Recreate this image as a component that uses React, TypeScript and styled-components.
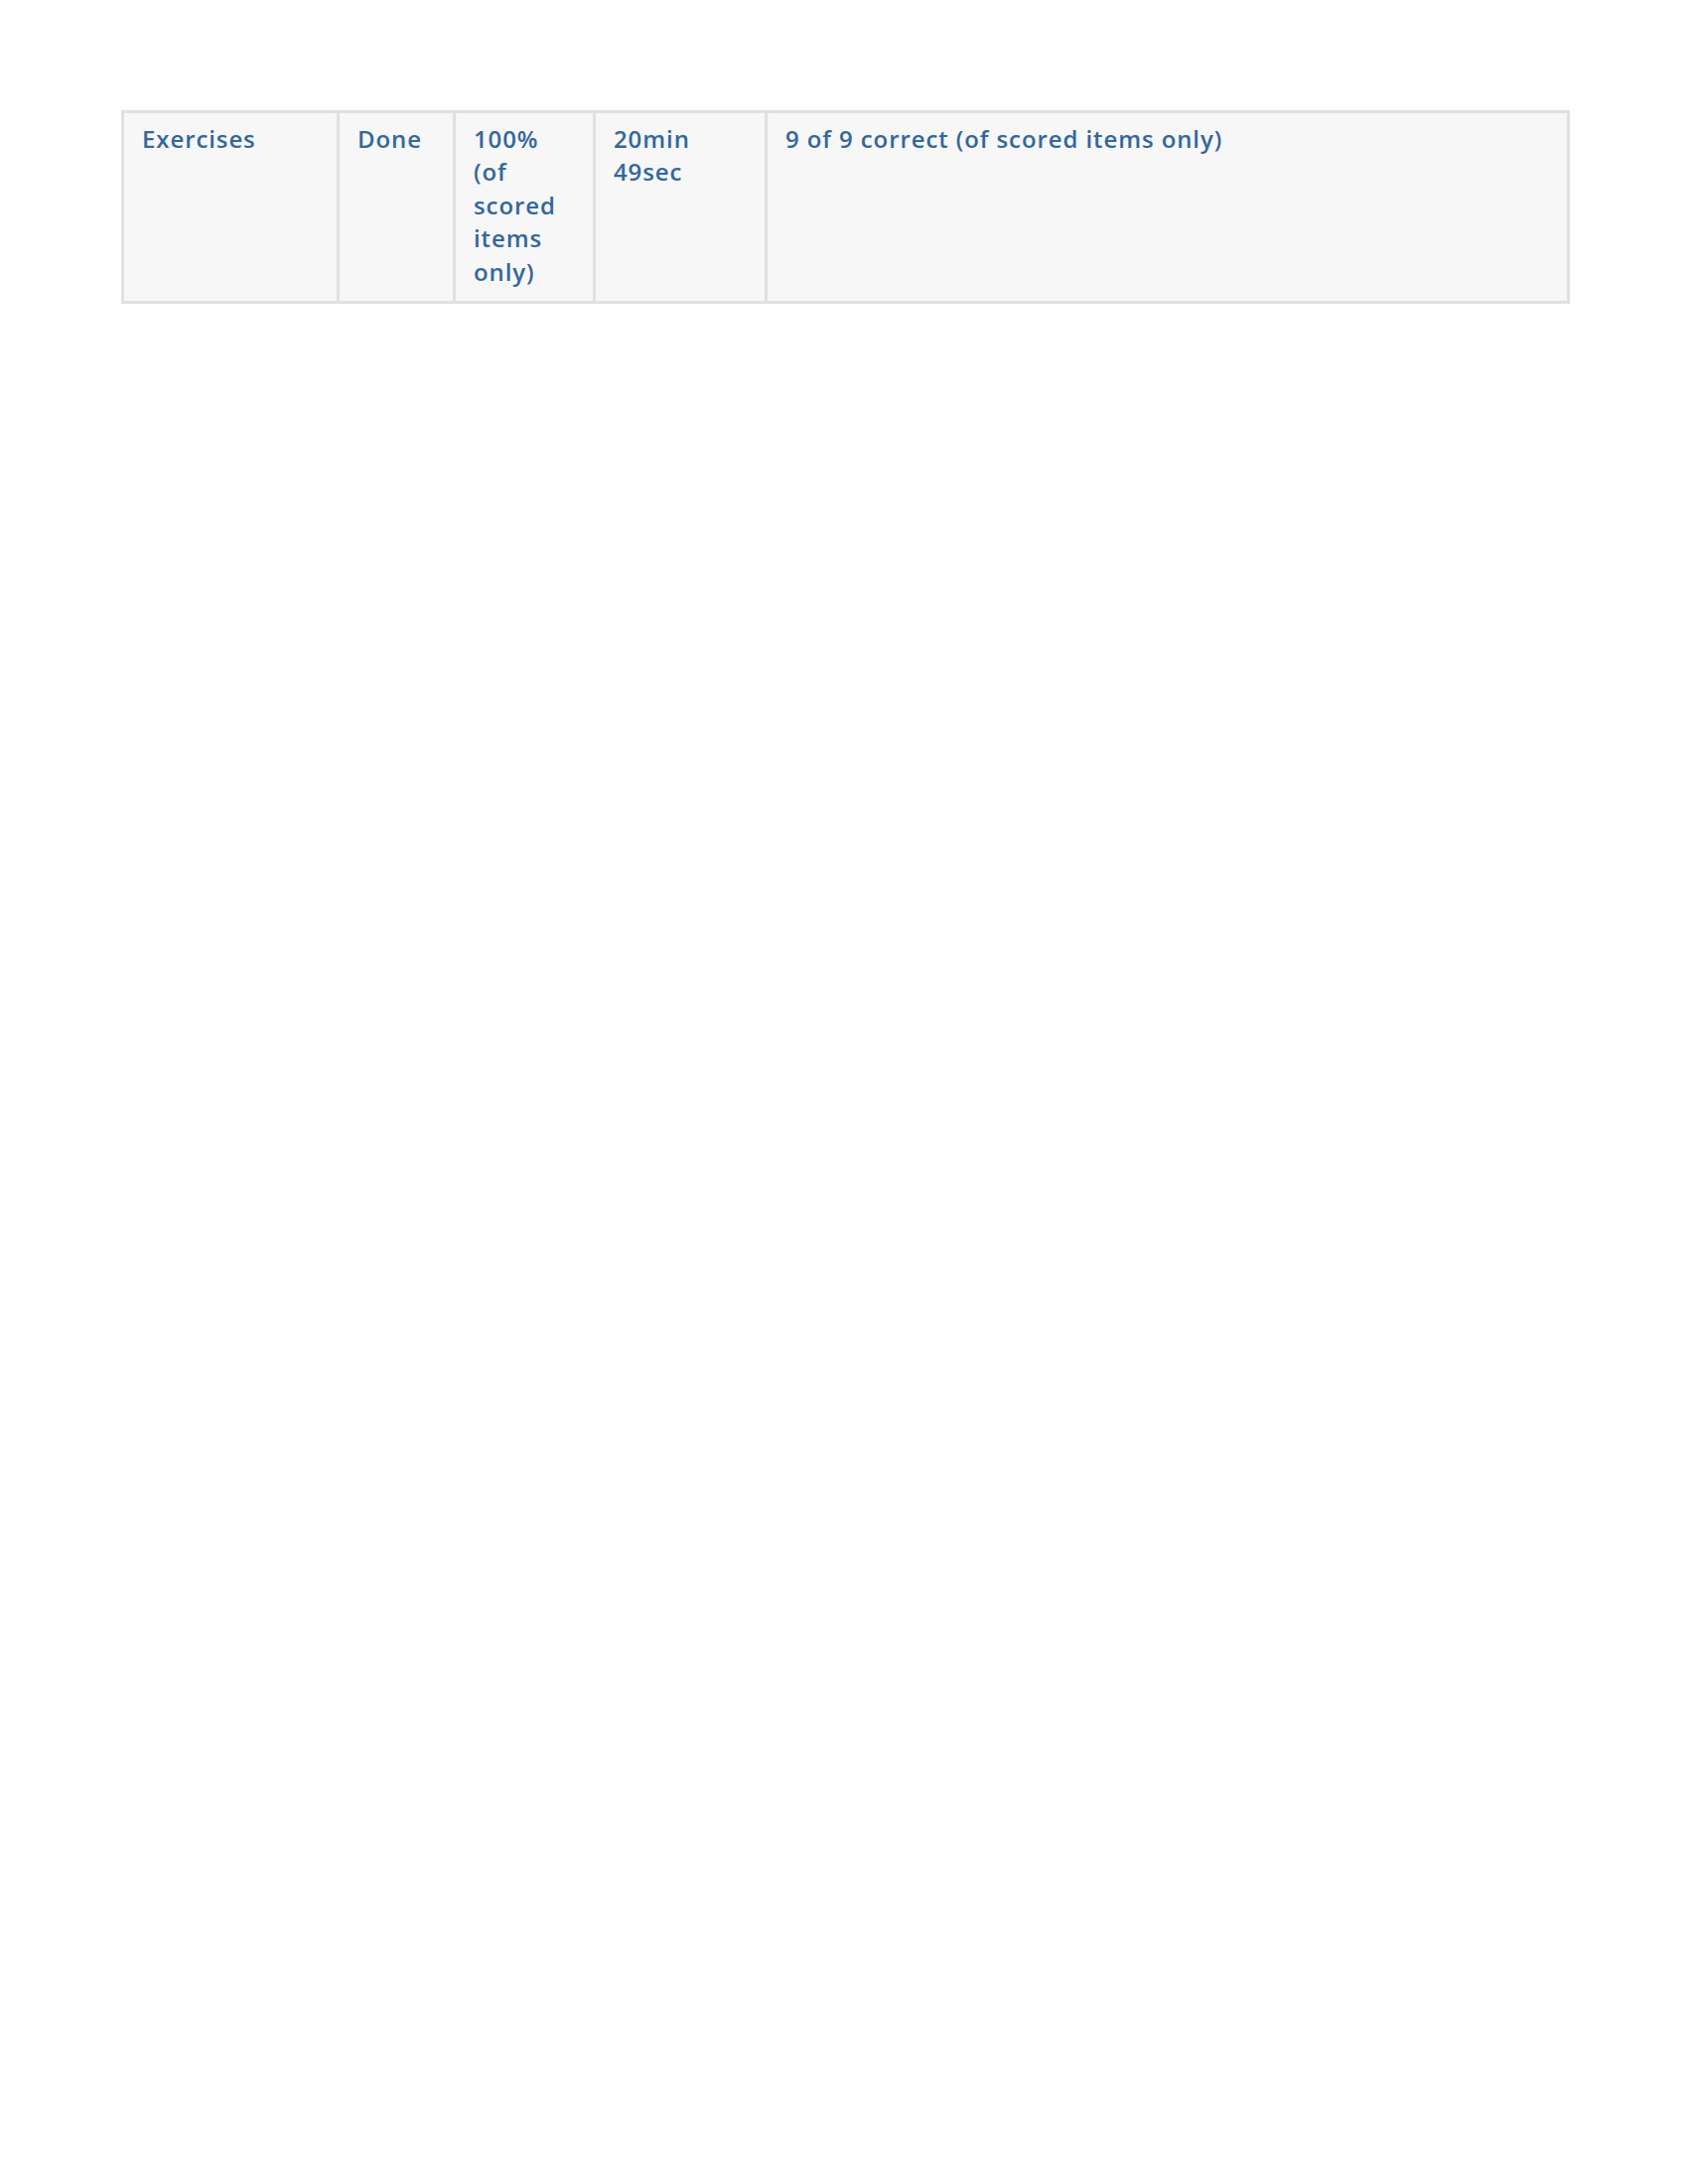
import React from "react";
import styled, { createGlobalStyle } from "styled-components";

const Global = createGlobalStyle`
  html, body { margin: 0; padding: 0; background: #fefefe; }
  body { font-family: "Open Sans", sans-serif; }
`;

const Page = styled.div`
  padding: 111px 119px 111px 122px;
`;

const Table = styled.table`
  width: 100%;
  table-layout: fixed;
  border-collapse: collapse;
  background: #f7f7f7;
  border: 3px solid #e0e0e0;
`;

const Cell = styled.td<{ $w?: number }>`
  box-sizing: border-box;
  border: 3px solid #e0e0e0;
  padding: 9px 18px 13px;
  vertical-align: top;
  width: ${(p) => (p.$w ? `${p.$w}px` : "auto")};
  color: #34679c;
  font-family: "Open Sans", sans-serif;
  font-weight: 600;
  font-size: 24px;
  letter-spacing: 0.9px;
  line-height: 33.4px;
`;

const rows = [
  { text: "Exercises", w: 217 },
  { text: "Done", w: 117 },
  { text: "100% (of scored items only)", w: 141 },
  { text: "20min 49sec", w: 173 },
  { text: "9 of 9 correct (of scored items only)" },
];

export default function App() {
  return (
    <>
      <Global />
      <Page>
        <Table>
          <tbody>
            <tr>
              {rows.map((r) => (
                <Cell key={r.text} $w={r.w}>
                  {r.text}
                </Cell>
              ))}
            </tr>
          </tbody>
        </Table>
      </Page>
    </>
  );
}
